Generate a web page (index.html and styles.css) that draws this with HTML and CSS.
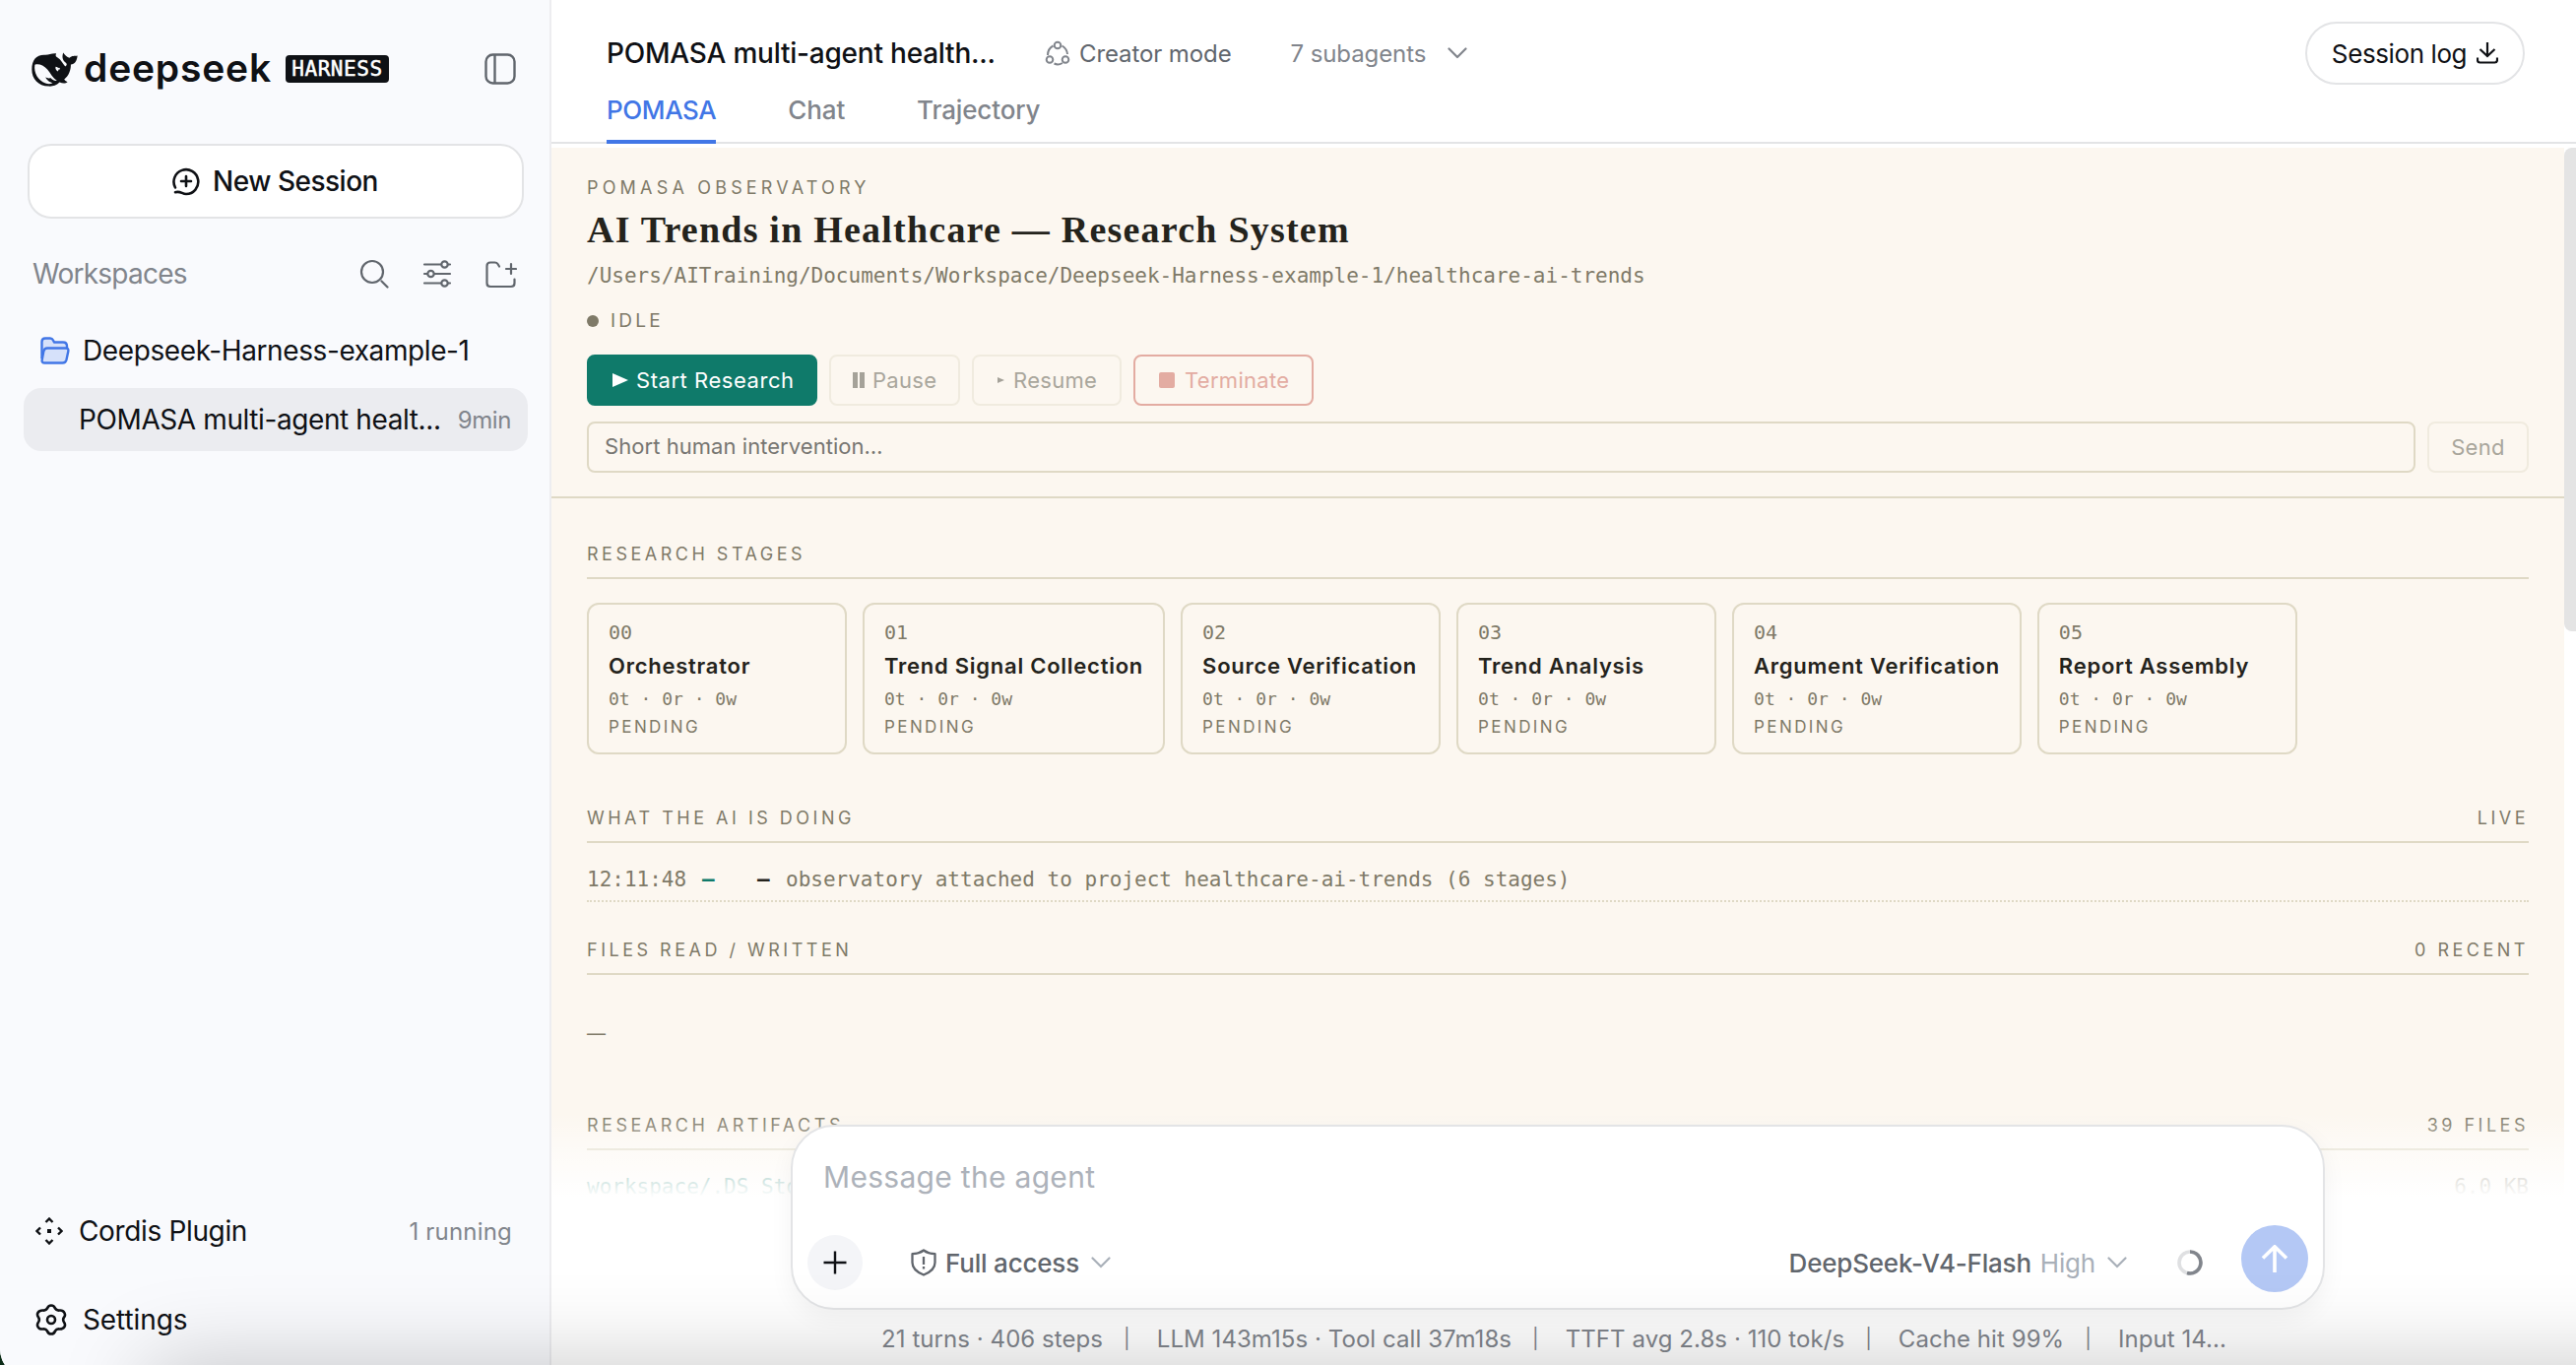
FILE: index.html
```html
<!DOCTYPE html>
<html lang="en">

<head>
    <meta charset="utf-8">
    <title>POMASA multi-agent healthcare</title>
    <link rel="stylesheet" href="styles.css">
</head>

<body>
    <div class="app">
        <aside class="sidebar">
            <div class="brand">
                <svg class="whale" viewBox="24 26 140 104">
                    <path fill="#0f1115" fill-rule="evenodd" d="M25 78C25 48 40 32 66 34C78 34 84 29 99 30C95 36 98 39 103 42C113 48 119 60 126 69C132 66 132 60 127 57C117 50 116 38 120 27C125 35 131 40 139 43C146 35 154 38 163 36C161 53 155 61 143 63C143 81 137 96 123 108C125 113 130 114 133 116C128 121 118 121 109 117C98 127 87 130 76 129C44 128 25 107 25 78ZM34 64C30 88 44 112 66 120C74 123 82 123 88 119C76 116 72 111 66 102C72 104 76 106 81 103C86 108 93 114 101 112C88 104 82 90 72 78C60 64 44 60 34 64ZM97 70C95 76 99 82 104 84C107 80 107 70 97 70Z" />
                    <circle cx="107" cy="76" r="3" fill="#f9fafd" />
                </svg>
                <span class="wordmark">deepseek</span>
                <span class="harness">HARNESS</span>
                <svg class="toggle" viewBox="0 0 32 32" fill="none" stroke="#61666d" stroke-width="2.4">
                    <rect x="1.5" y="1.5" width="29" height="29" rx="7" />
                    <path d="M10.5 2v28" />
                </svg>
            </div>
            <button class="new-session">
                <svg viewBox="0 0 30 30" width="30" height="30" fill="none" stroke="#0f1115" stroke-width="2.6" stroke-linecap="round">
                    <path d="M4 21.5A12.4 12.4 0 1 1 15 28c-4 0-6-3.4-11-1.8" />
                    <path d="M15 10v10M10 15h10" />
                </svg>
                <span>New Session</span>
            </button>
            <div class="workspaces">
                <span class="workspaces-title">Workspaces</span>
                <svg viewBox="0 0 30 30" width="30" height="30" fill="none" stroke="#61666d" stroke-width="2.2" stroke-linecap="round">
                    <circle cx="13" cy="13" r="11" />
                    <path d="M22.5 22.5l6 6" />
                </svg>
                <svg viewBox="0 0 30 30" width="30" height="30" fill="none" stroke="#61666d" stroke-width="2.2" stroke-linecap="round">
                    <path d="M2 5.500h17M26 5.500h2M2 15h3M12 15h16M2 24.500h17M26 24.500h2" />
                    <circle cx="22.500" cy="5.500" r="3.200" />
                    <circle cx="8.500" cy="15" r="3.200" />
                    <circle cx="22.500" cy="24.500" r="3.200" />
                </svg>
                <svg viewBox="0 0 32 30" width="32" height="30" fill="none" stroke="#61666d" stroke-width="2.200" stroke-linecap="round">
                    <path d="M14 7.500l-1.500-2.500q-1-1.500-3-1.500H5q-3.500 0-3.500 3.500v17.500q0 3.500 3.500 3.500h21q3.500 0 3.500-3.500v-4" />
                    <path d="M21 10h10M26 5v10" />
                </svg>
            </div>
            <div class="workspace">
                <svg viewBox="0 0 30 28" width="30" height="28" fill="#d6e1fa" stroke="#4176e6" stroke-width="2.400" stroke-linejoin="round">
                    <path d="M1.500 22V5q0-3.500 3.500-3.500h5q2 0 3 2l1 2h9q4 0 4 4v3" />
                    <path d="M7 11.500h18.500q3.500 0 2.800 3.300l-1.800 8.400q-.8 3.300-4 3.300H4.500q-3.500 0-2.800-3.300l1.600-8.400q.7-3.300 3.700-3.300z" />
                </svg>
                <span class="label">Deepseek-Harness-example-1</span>
            </div>
            <div class="session">
                <span class="label">POMASA multi-agent healt...</span>
                <span class="age">9min</span>
            </div>
            <div class="sidebar-bottom">
                <div class="bottom-item plugin">
                    <svg viewBox="0 0 28 28" width="28" height="28" fill="none" stroke="#0f1115" stroke-width="2.400">
                        <path d="M10.500 5L14 1.500 17.500 5M10.500 23l3.500 3.500 3.500-3.500M5 10.500L1.500 14 5 17.500M23 10.500l3.500 3.500-3.500 3.500" />
                        <rect x="12" y="12" width="4" height="4" fill="#0f1115" stroke="none" />
                    </svg>
                    <span class="label">Cordis Plugin</span>
                    <span class="running">1 running</span>
                </div>
                <div class="bottom-item settings">
                    <svg viewBox="0 0 32 32" width="32" height="32" fill="none" stroke="#0f1115" stroke-width="2.600" stroke-linejoin="round">
                        <path d="M12 4.500Q13 1.500 16 1.500T20 4.500Q21.500 7 24.500 6.500Q28 6.200 29.400 9T29 13.500Q27.300 16 29 18.500Q30.800 21 29.400 23.300T24.500 25.500Q21.500 25 20 27.500Q19 30.500 16 30.500T12 27.500Q10.500 25 7.500 25.500Q4 25.800 2.600 23.300T3 18.500Q4.700 16 3 13.500Q1.200 11 2.600 8.700T7.500 6.500Q10.500 7 12 4.500Z" />
                        <circle cx="16" cy="16" r="4" />
                    </svg>
                    <span class="label">Settings</span>
                </div>
            </div>
        </aside>

        <main class="main">
            <header class="header">
                <div class="header-row">
                    <h1 class="session-title">POMASA multi-agent health...</h1>
                    <div class="mode">
                        <svg viewBox="0 0 26 26" width="26" height="26" fill="none" stroke="#81858c" stroke-width="2">
                            <circle cx="13" cy="5" r="3.300" />
                            <circle cx="5" cy="19.500" r="3.300" />
                            <circle cx="21" cy="19.500" r="3.300" />
                            <path d="M8.500 5.500Q3 8.500 3 15M17.500 5.500Q22.500 8.500 23 14M9.500 23.500Q13.500 25.500 18 23" />
                        </svg>
                        <span>Creator mode</span>
                    </div>
                    <div class="subagents">
                        <span>7 subagents</span>
                        <svg viewBox="0 0 20 12" width="20" height="12" fill="none" stroke="#81858c" stroke-width="2.200" stroke-linecap="round" stroke-linejoin="round">
                            <path d="M1.500 1.500l8.500 8.500 8.500-8.500" />
                        </svg>
                    </div>
                    <button class="session-log">
                        <span>Session log</span>
                        <svg viewBox="0 0 22 22" width="22" height="22" fill="none" stroke="#0f1115" stroke-width="2.200">
                            <path d="M11 0v14M3.500 7l7.500 7 7.500-7M1 15.500V18q0 2.500 2.500 2.500h15q2.500 0 2.500-2.500v-2.500" />
                        </svg>
                    </button>
                </div>
                <nav class="tabs">
                    <a class="tab active">POMASA</a>
                    <a class="tab">Chat</a>
                    <a class="tab">Trajectory</a>
                </nav>
            </header>

            <div class="scroll-area">
                <div class="observatory">
                    <div class="project">
                        <div class="eyebrow">POMASA OBSERVATORY</div>
                        <h2 class="project-title">AI Trends in Healthcare — Research System</h2>
                        <div class="path">/Users/AITraining/Documents/Workspace/Deepseek-Harness-example-1/healthcare-ai-trends</div>
                        <div class="status"><i class="dot"></i>IDLE</div>
                        <div class="controls">
                            <button class="btn start">
                                <svg viewBox="0 0 16 14" width="16" height="14"><path d="M0 0l16 7-16 7z" fill="#fff" /></svg>
                                <span>Start Research</span>
                            </button>
                            <button class="btn pause">
                                <svg viewBox="0 0 12 16" width="12" height="16"><path d="M0 0h5v16H0zM7 0h5v16H7z" fill="#a5a299" /></svg>
                                <span>Pause</span>
                            </button>
                            <button class="btn resume">
                                <svg viewBox="0 0 7 6" width="7" height="6"><path d="M0 0l7 3-7 3z" fill="#a5a299" /></svg>
                                <span>Resume</span>
                            </button>
                            <button class="btn terminate">
                                <svg viewBox="0 0 16 16" width="16" height="16"><rect width="16" height="16" rx="2" fill="#e3aca2" /></svg>
                                <span>Terminate</span>
                            </button>
                        </div>
                        <div class="intervention">
                            <div class="field">Short human intervention…</div>
                            <button class="btn send">Send</button>
                        </div>
                    </div>

                    <section class="block stages-block">
                        <div class="block-head"><span>RESEARCH STAGES</span></div>
                        <div class="stages">
                            <div class="stage">
                                <div class="num">00</div>
                                <div class="name">Orchestrator</div>
                                <div class="counts">0t · 0r · 0w</div>
                                <div class="state">PENDING</div>
                            </div>
                            <div class="stage">
                                <div class="num">01</div>
                                <div class="name">Trend Signal Collection</div>
                                <div class="counts">0t · 0r · 0w</div>
                                <div class="state">PENDING</div>
                            </div>
                            <div class="stage">
                                <div class="num">02</div>
                                <div class="name">Source Verification</div>
                                <div class="counts">0t · 0r · 0w</div>
                                <div class="state">PENDING</div>
                            </div>
                            <div class="stage">
                                <div class="num">03</div>
                                <div class="name">Trend Analysis</div>
                                <div class="counts">0t · 0r · 0w</div>
                                <div class="state">PENDING</div>
                            </div>
                            <div class="stage">
                                <div class="num">04</div>
                                <div class="name">Argument Verification</div>
                                <div class="counts">0t · 0r · 0w</div>
                                <div class="state">PENDING</div>
                            </div>
                            <div class="stage">
                                <div class="num">05</div>
                                <div class="name">Report Assembly</div>
                                <div class="counts">0t · 0r · 0w</div>
                                <div class="state">PENDING</div>
                            </div>
                        </div>
                    </section>

                    <section class="block activity-block">
                        <div class="block-head"><span>WHAT THE AI IS DOING</span><span>LIVE</span></div>
                        <div class="log-row">
                            <span>12:11:48</span>
                            <b class="who">–</b>
                            <b class="what">–</b>
                            <span>observatory attached to project healthcare-ai-trends (6 stages)</span>
                        </div>
                    </section>

                    <section class="block files-block">
                        <div class="block-head"><span>FILES READ / WRITTEN</span><span>0 RECENT</span></div>
                        <div class="empty">—</div>
                    </section>

                    <section class="block artifacts-block">
                        <div class="block-head"><span>RESEARCH ARTIFACTS</span><span>39 FILES</span></div>
                        <div class="artifact">
                            <span class="file">workspace/.DS_Store</span>
                            <span>6.0 KB</span>
                        </div>
                    </section>
                </div>
                <div class="scrollbar"></div>
            </div>

            <div class="dock">
                <div class="composer">
                    <div class="placeholder">Message the agent</div>
                    <div class="tools">
                        <button class="add">
                            <svg viewBox="0 0 24 24" width="24" height="24" stroke="#0f1115" stroke-width="2.400"><path d="M12 .5v23M.5 12h23" /></svg>
                        </button>
                        <div class="access">
                            <svg viewBox="0 0 26 28" width="26" height="28" fill="none" stroke="#61666d" stroke-width="2.300" stroke-linejoin="round">
                                <path d="M13 1.500Q17.500 5 24.500 5.200V14q0 8-11.500 12.500Q1.500 22 1.500 14V5.200Q8.500 5 13 1.500z" />
                                <path d="M13 8v8M13 18v2.500" />
                            </svg>
                            <span>Full access</span>
                            <svg class="chev" viewBox="0 0 20 12" width="20" height="12" fill="none" stroke="#a9b0b9" stroke-width="2.200" stroke-linecap="round"><path d="M1.500 1.500l8.500 8.500 8.500-8.500" /></svg>
                        </div>
                        <div class="model">
                            <span>DeepSeek-V4-Flash</span>
                            <span class="effort">High</span>
                            <svg class="chev" viewBox="0 0 20 12" width="20" height="12" fill="none" stroke="#a9b0b9" stroke-width="2.200" stroke-linecap="round"><path d="M1.500 1.500l8.500 8.500 8.500-8.500" /></svg>
                        </div>
                        <svg class="usage" viewBox="0 0 26 26" width="26" height="26" fill="none" stroke-width="3.600">
                            <circle cx="13" cy="13" r="11" stroke="#dfe0e2" />
                            <path d="M13 2a11 11 0 1 1-3 21.600" stroke="#81858c" />
                        </svg>
                        <button class="submit">
                            <svg viewBox="0 0 28 28" width="28" height="28" fill="none" stroke="#fff" stroke-width="3.600"><path d="M14 28V2M2 13.500L14 1.800l12 11.700" /></svg>
                        </button>
                    </div>
                </div>
                <div class="stats">
                    <span>21 turns · 406 steps</span><i>|</i>
                    <span>LLM 143m15s · Tool call 37m18s</span><i>|</i>
                    <span>TTFT avg 2.8s · 110 tok/s</span><i>|</i>
                    <span>Cache hit 99%</span><i>|</i>
                    <span>Input 14...</span>
                </div>
            </div>
        </main>
        <div class="bottom-shade"></div>
    </div>
</body>

</html>
```
FILE: styles.css
```css
* {
    box-sizing: border-box;
}

body {
    margin: 0;
    height: 1386px;
    overflow: hidden;
    background: #0c2c18;
    font-family: Inter, "Liberation Sans", sans-serif;
    color: #0f1115;
}

button {
    font: inherit;
    color: inherit;
    padding: 0;
    border: none;
    background: none;
}

svg {
    display: block;
    flex: none;
}

/* the window runs a little past the bottom of the screen */
.app {
    position: relative;
    display: flex;
    height: 1398px;
    padding-bottom: 12px;
    border-bottom-left-radius: 28px;
    overflow: hidden;
    background: linear-gradient(90deg, #f9fafd 558px, #fff 558px);
    white-space: nowrap;
}

/* sidebar */
.sidebar {
    display: flex;
    flex-direction: column;
    flex: none;
    width: 560px;
    padding: 0 22px 14px 24px;
    border-right: 2px solid #ededf0;
    background: #f9fafd;
    font-size: 28px;
}

.brand {
    display: flex;
    align-items: center;
    height: 140px;
    padding: 0 12px 0 8px;
}

.whale {
    width: 47px;
    height: 35px;
}

.wordmark {
    width: 199px;
    margin: -3px 0 0 6px;
    font-size: 39px;
    font-weight: 600;
    line-height: 48px;
    letter-spacing: 0.8px;
}

.harness {
    width: 105px;
    height: 28px;
    margin-left: 6px;
    border-radius: 4px;
    background: #0f1115;
    color: #fff;
    font-family: "DejaVu Sans Mono", monospace;
    font-size: 21px;
    line-height: 29px;
    letter-spacing: 0.6px;
    text-align: center;
    -webkit-text-stroke: 0.5px #fff;
}

.toggle {
    width: 32px;
    height: 32px;
    margin-left: auto;
}

.new-session {
    display: flex;
    align-items: center;
    justify-content: center;
    gap: 12px;
    height: 76px;
    margin: 6px 4px 0 4px;
    padding-right: 2px;
    border: 2px solid #e3e4e6;
    border-radius: 24px;
    background: #fff;
    font-weight: 500;
    letter-spacing: -0.5px;
}

.workspaces {
    display: flex;
    align-items: center;
    gap: 34px;
    height: 56px;
    margin: 28px 0 18px;
    padding: 0 11px 0 9px;
}

.workspaces-title {
    margin-right: auto;
    color: #81858c;
    letter-spacing: -0.75px;
}

.workspace,
.session {
    display: flex;
    align-items: center;
    height: 64px;
    letter-spacing: -0.4px;
}

.workspace {
    gap: 13px;
    padding-left: 17px;
}

.session {
    margin-top: 6px;
    padding: 0 17px 0 56px;
    border-radius: 18px;
    background: #ebecf0;
}

.age,
.running {
    margin-left: auto;
    color: #81858c;
    font-size: 24px;
}

.sidebar-bottom {
    display: flex;
    flex-direction: column;
    gap: 26px;
    margin-top: auto;
}

.bottom-item {
    display: flex;
    align-items: center;
    height: 64px;
    letter-spacing: -0.35px;
}

.plugin {
    gap: 16px;
    padding: 0 16px 0 12px;
}

.bottom-item .running {
    letter-spacing: 0.2px;
}

.settings {
    gap: 16px;
    padding-left: 12px;
    letter-spacing: -0.1px;
}

/* header */
.main {
    position: relative;
    display: flex;
    flex-direction: column;
    flex: 1;
    min-width: 0;
    background: #fff;
}

.header {
    height: 146px;
    padding-top: 22px;
    border-bottom: 2px solid #e3e4e6;
}

.header-row {
    display: flex;
    align-items: center;
    height: 64px;
    padding: 0 52px 0 56px;
    color: #61666d;
    font-size: 24px;
    letter-spacing: -0.1px;
}

.session-title {
    width: 394px;
    margin: 0;
    color: #0f1115;
    font-size: 28px;
    font-weight: 500;
    letter-spacing: -0.22px;
}

.mode {
    display: flex;
    align-items: center;
    gap: 9px;
    margin-left: 51px;
}

.subagents {
    display: flex;
    align-items: center;
    gap: 22px;
    margin-left: 60px;
    color: #81858c;
}

.session-log {
    display: flex;
    align-items: center;
    justify-content: center;
    gap: 10px;
    width: 223px;
    height: 64px;
    margin-left: auto;
    border: 2px solid #e3e4e6;
    border-radius: 32px;
    color: #0f1115;
    font-size: 26px;
    letter-spacing: -0.4px;
}

.tabs {
    display: flex;
    gap: 73px;
    padding-left: 56px;
}

.tab {
    height: 60px;
    color: #81858c;
    font-size: 26px;
    font-weight: 500;
    line-height: 51px;
    letter-spacing: -0.15px;
}

.tab.active {
    border-bottom: 4px solid #4176e6;
    color: #4176e6;
    letter-spacing: -0.4px;
}

/* observatory page */
.scroll-area {
    display: flex;
    align-items: flex-start;
    height: 1090px;
    margin-top: 4px;
    overflow: hidden;
}

.observatory {
    flex: 1;
    height: 1090px;
    background: #fcf7f0;
    color: #7f7a68;
}

.scrollbar {
    width: 12px;
    height: 491px;
    border-radius: 8px 0 0 8px;
    background: #e4e4e4;
}

.project {
    padding: 29px 36px 24px;
    border-bottom: 2px solid #dfd9c5;
}

.eyebrow {
    font-size: 18px;
    line-height: 24px;
    letter-spacing: 4.18px;
}

.project-title {
    margin: 8px 0 10px;
    color: #24231c;
    font-family: "Liberation Serif", serif;
    font-size: 38px;
    font-weight: 700;
    line-height: 45px;
    letter-spacing: 1.22px;
}

.path,
.log-row,
.artifact {
    font-family: "DejaVu Sans Mono", monospace;
    font-size: 21px;
    line-height: 28px;
}

.status {
    display: flex;
    align-items: center;
    gap: 12px;
    margin-top: 20px;
    font-size: 19px;
    line-height: 24px;
    letter-spacing: 3.2px;
}

.dot {
    width: 12px;
    height: 12px;
    border-radius: 50%;
    background: #7f7a68;
}

.controls {
    display: flex;
    gap: 12px;
    margin-top: 22px;
}

.btn {
    display: flex;
    align-items: center;
    height: 52px;
    padding-bottom: 1px;
    border: 2px solid #f0ebdf;
    border-radius: 8px;
    color: #a9a69c;
    font-size: 22px;
    letter-spacing: 0.3px;
}

.start {
    gap: 8px;
    width: 234px;
    padding-left: 24px;
    border-color: #0f7a6a;
    background: #0f7a6a;
    color: #fff;
    letter-spacing: 0.55px;
}

.pause {
    gap: 8px;
    width: 133px;
    padding-left: 22px;
}

.resume {
    gap: 9px;
    width: 152px;
    padding-left: 24px;
}

.terminate {
    gap: 10px;
    width: 183px;
    padding-left: 24px;
    border-color: #e3aca2;
    color: #e3aca2;
}

.intervention {
    display: flex;
    gap: 12px;
    margin-top: 16px;
}

.field {
    flex: 1;
    height: 52px;
    padding-left: 16px;
    border: 2px solid #dfd9c5;
    border-radius: 8px;
    color: #777672;
    font-size: 22px;
    line-height: 47px;
    letter-spacing: 0.05px;
}

.send {
    justify-content: center;
    width: 103px;
}

.block {
    margin: 0 36px;
}

.stages-block {
    padding-top: 42px;
}

.activity-block {
    padding-top: 50px;
}

.files-block {
    padding-top: 34px;
}

.block-head {
    display: flex;
    justify-content: space-between;
    height: 40px;
    border-bottom: 2px solid #dfd9c5;
    font-size: 18px;
    line-height: 30px;
    letter-spacing: 3.5px;
}

.stages {
    display: flex;
    gap: 16px;
    margin-top: 24px;
}

.stage {
    min-width: 264px;
    height: 154px;
    padding: 14px 20px;
    border: 2px solid #dfd9c5;
    border-radius: 12px;
}

.num {
    font-family: "DejaVu Sans Mono", monospace;
    font-size: 20px;
    line-height: 28px;
}

.name {
    margin: 5px 0 7px;
    color: #24231c;
    font-size: 22px;
    font-weight: 600;
    line-height: 30px;
    letter-spacing: 0.75px;
}

.counts {
    font-family: "DejaVu Sans Mono", monospace;
    font-size: 18px;
    line-height: 24px;
}

.state {
    margin-top: 4px;
    font-size: 17px;
    line-height: 24px;
    letter-spacing: 2.4px;
}

.log-row {
    display: grid;
    grid-template-columns: 117px 56px 29px 1fr;
    height: 60px;
    padding-top: 23px;
    border-bottom: 2px dotted #dfd9c5;
}

.who {
    color: #0f7a6a;
}

.what {
    color: #24231c;
}

.empty {
    height: 138px;
    padding-top: 46px;
    font-size: 19px;
    line-height: 28px;
}

.artifact {
    display: flex;
    justify-content: space-between;
    padding-top: 23px;
}

.file {
    color: #0f7a6a;
}

/* message box floating over the page */
.dock {
    position: absolute;
    left: 0;
    right: 12px;
    bottom: 0;
    display: flex;
    flex-direction: column;
    align-items: center;
    height: 266px;
    padding-top: 22px;
    background: linear-gradient(rgba(255, 255, 255, 0) 10px, rgba(255, 255, 255, 0.45) 46px, #fff 96px);
}

.composer {
    display: flex;
    flex-direction: column;
    justify-content: space-between;
    width: 1558px;
    height: 188px;
    padding: 31px 15px 16px 15px;
    border: 2px solid #e3e4e6;
    border-radius: 44px;
    background: #fff;
    box-shadow: 0 8px 24px rgba(0, 0, 0, 0.05);
}

.placeholder {
    padding-left: 16px;
    color: #adb2ba;
    font-size: 30px;
    line-height: 40px;
    letter-spacing: 0.3px;
}

.tools {
    display: flex;
    align-items: center;
    height: 68px;
    font-size: 26px;
    font-weight: 500;
    letter-spacing: -0.2px;
    color: #61666d;
}

.add {
    display: flex;
    align-items: center;
    justify-content: center;
    width: 56px;
    height: 56px;
    margin-top: 8px;
    border-radius: 50%;
    background: #f4f5f8;
}

.access,
.model {
    display: flex;
    align-items: center;
    margin-top: 8px;
}

.access {
    gap: 9px;
    margin-left: 49px;
}

.chev {
    margin-left: 3px;
}

.model {
    gap: 9px;
    margin-left: auto;
}

.effort {
    color: #a9b0b9;
    font-weight: 400;
}

.usage {
    margin: 8px 39px 0 51px;
}

.submit {
    display: flex;
    align-items: center;
    justify-content: center;
    width: 68px;
    height: 68px;
    border-radius: 50%;
    background: #b4c8f5;
}

.stats {
    display: flex;
    align-items: center;
    margin: 12px 8px 0 0;
    color: #81858c;
    font-size: 24px;
    line-height: 35px;
    letter-spacing: 0.06px;
}

.stats i {
    margin: 0 27px 0 21px;
    font-size: 20px;
    font-style: normal;
}

/* soft dark edge along the bottom of the screen */
.bottom-shade {
    position: absolute;
    top: 1386px;
    left: 150px;
    right: -200px;
    height: 200px;
    box-shadow: 0 0 90px rgba(0, 0, 0, 0.22);
    pointer-events: none;
}
```
